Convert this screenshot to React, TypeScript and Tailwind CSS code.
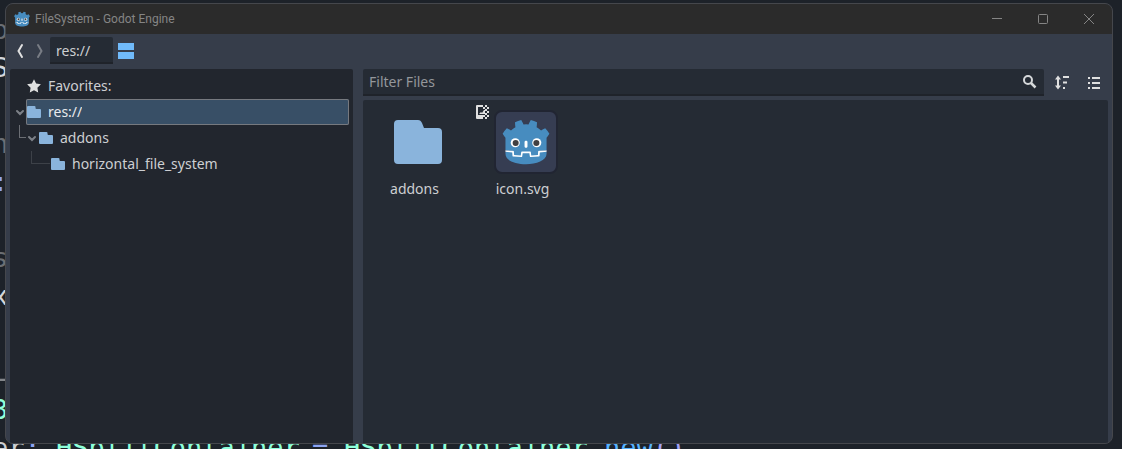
import type { ReactNode } from "react";

const HEAD =
  "m105 673 152 14q12 1 15 14l4 67 132 10 8-61q2-11 15-15h162q13 4 15 15l8 61 132-10 4-67q3-13 15-14l152-14V427q30-39 56-81-35-59-83-108-43 20-82 47-40-37-88-64 7-51 8-102-59-28-123-42-26 43-46 89-49-7-98 0-20-46-46-89-64 14-123 42 1 51 8 102-48 27-88 64-39-27-82-47-48 49-83 108 26 42 56 81zm0 33v39c0 276 813 276 814 0v-39l-134 12-5 69q-2 10-14 13l-162 11q-12 0-16-11l-10-65H446l-10 65q-4 11-16 11l-162-11q-12-3-14-13l-5-69z";

function GodotHead() {
  return (
    <>
      <g fill="#fff">
        <path d="M105 673v33q407 354 814 0v-33z" />
        <path d={HEAD} fill="#478cbf" />
        <path d="M483 600c0 34 58 34 58 0v-86c0-34-58-34-58 0z" />
        <circle cx="725" cy="526" r="90" />
        <circle cx="299" cy="526" r="90" />
      </g>
      <g fill="#414042">
        <circle cx="307" cy="532" r="60" />
        <circle cx="717" cy="532" r="60" />
      </g>
    </>
  );
}

function ProjectIcon() {
  return (
    <svg viewBox="0 0 128 128" className="size-16" aria-hidden="true">
      <rect x="2" y="2" width="124" height="124" rx="14" fill="#363d52" stroke="#212532" strokeWidth="4" />
      <g transform="translate(12.322 12.322) scale(.101)">
        <GodotHead />
      </g>
    </svg>
  );
}

function FolderBig() {
  return (
    <svg viewBox="0 0 64 64" className="size-16" aria-hidden="true">
      <path
        d="M12 10h20c2 0 3 1 4 3l2 5h14a4 4 0 0 1 4 4v28a4 4 0 0 1-4 4H12a4 4 0 0 1-4-4V14a4 4 0 0 1 4-4z"
        fill="#8ab4dc"
      />
    </svg>
  );
}

function FolderSmall() {
  return (
    <svg viewBox="0 0 16 16" className="size-4 shrink-0" aria-hidden="true">
      <path
        d="M2 2a1 1 0 0 0-1 1v10a1 1 0 0 0 1 1h12a1 1 0 0 0 1-1V6a1 1 0 0 0-1-1h-3.500a1 1 0 0 1-1-1V3a1 1 0 0 0-1-1z"
        fill="#8ab4dc"
      />
    </svg>
  );
}

function Arrow() {
  return (
    <svg viewBox="0 0 12 12" className="size-3 shrink-0" fill="none" stroke="#7c8087" strokeWidth="2" strokeLinecap="round" aria-hidden="true">
      <path d="M3 5l3 3 3-3" />
    </svg>
  );
}

function TreeRow({ lead, icon, label, selected }: { lead: ReactNode; icon: ReactNode; label: string; selected?: boolean }) {
  return (
    <li className="flex h-[26px] items-center" role="treeitem" aria-selected={!!selected}>
      {lead}
      <div
        className={
          selected
            ? "flex h-full min-w-0 grow items-center gap-1.5 rounded-xs bg-[#384f66] text-[#e8eaed] inset-ring inset-ring-[#76797f]"
            : "flex h-full min-w-0 grow items-center gap-1.5"
        }
      >
        {icon}
        <span className="truncate">{label}</span>
      </div>
    </li>
  );
}

const codeLines = [
  { text: "p", tone: "text-[#6b6f74]" },
  { text: "S", tone: "text-[#d3d6da]" },
  { text: "", tone: "" },
  { text: "n", tone: "text-[#6b6f74]" },
  { text: ":", tone: "text-[#8da5f3]" },
  { text: "", tone: "" },
  { text: "s", tone: "text-[#6b6f74]" },
  { text: "x", tone: "text-[#d3d6da]" },
  { text: "", tone: "" },
  { text: "L", tone: "text-[#83868a]" },
  { text: "3", tone: "text-[#8effda]" },
];

function CodeBackdrop() {
  return (
    <div
      className="absolute top-0 -left-2 flex flex-col whitespace-pre pt-[11px] font-['DejaVu_Sans_Mono',monospace] text-[27px] leading-[38px]"
      aria-hidden="true"
    >
      {codeLines.map((line, i) => (
        <div key={i} className={`h-[38px] ${line.tone}`}>
          {line.text}
        </div>
      ))}
      <div className="flex h-[38px] gap-4 text-[#8effda]">
        <span className="w-12 text-[#cdcfd2]">
          er<span className="text-[#8da5f3]">:</span>
        </span>
        <span className="w-60">HSplitContainer</span>
        <span className="w-4 text-[#8da5f3]">=</span>
        <span>
          HSplitContainer<span className="text-[#8da5f3]">.</span>
          <span className="text-[#57b3ff]">new</span>
          <span className="text-[#a3a3f5]">()</span>
        </span>
      </div>
    </div>
  );
}

function TitleBar() {
  return (
    <header className="flex h-[30px] shrink-0 items-center bg-[#2b2b2b] pl-2 text-[#858585]">
      <svg viewBox="40 40 944 944" className="size-4" aria-hidden="true">
        <GodotHead />
      </svg>
      <h1 className="grow pl-[5px] font-['Roboto',sans-serif] text-xs">FileSystem - Godot Engine</h1>
      <button type="button" aria-label="Minimize" className="flex h-full w-[46px] items-center justify-center">
        <svg viewBox="0 0 10 10" className="size-2.5" stroke="currentColor"><path d="M0 4.500h10" /></svg>
      </button>
      <button type="button" aria-label="Maximize" className="flex h-full w-[46px] items-center justify-center">
        <svg viewBox="0 0 10 10" className="size-2.5" fill="none" stroke="currentColor"><rect x=".5" y=".5" width="9" height="9" rx="1" /></svg>
      </button>
      <button type="button" aria-label="Close" className="flex h-full w-[46px] items-center justify-center">
        <svg viewBox="0 0 10 10" className="size-2.5" stroke="currentColor"><path d="M0 0l10 10M10 0L0 10" /></svg>
      </button>
    </header>
  );
}

function Toolbar() {
  return (
    <div className="flex h-[35px] shrink-0 items-center pb-0.5 pl-1">
      <button type="button" aria-label="Back" className="flex w-5 justify-center text-[#e0e0e0]">
        <svg viewBox="0 0 16 16" className="size-4" fill="none" stroke="currentColor" strokeWidth="2" strokeLinecap="round"><path d="M10 2L6.500 8l3.500 6" /></svg>
      </button>
      <button type="button" aria-label="Forward" className="flex w-5 justify-center text-[#797d85]">
        <svg viewBox="0 0 16 16" className="size-4" fill="none" stroke="currentColor" strokeWidth="2" strokeLinecap="round"><path d="M6 2l3.500 6L6 14" /></svg>
      </button>
      <input
        aria-label="Path"
        defaultValue="res://"
        className="h-[27px] w-[63px] rounded-t-xs border-b-2 border-[#1f232a] bg-[#252b34] px-1.5 pt-0.5 outline-none"
      />
      <button type="button" aria-label="Split mode" className="ml-[5px]">
        <svg viewBox="0 0 16 16" className="size-4" fill="#70bafa"><path d="M0 0h16v7H0zM0 9h16v7H0z" /></svg>
      </button>
    </div>
  );
}

function Tree() {
  return (
    <ul role="tree" className="w-[343px] shrink-0 rounded-t-xs bg-[#22262e] py-1 pr-1 pl-1">
      <TreeRow
        lead={<span className="w-3" />}
        icon={
          <svg viewBox="0 0 16 16" className="size-4 shrink-0" fill="#e0e0e0" aria-hidden="true">
            <path d="M8 1.200L5.900 5.600 1.100 6.300l3.500 3.400-.8 4.800L8 12.200l4.200 2.300-.8-4.800 3.500-3.400-4.800-.7z" />
          </svg>
        }
        label="Favorites:"
      />
      <TreeRow selected lead={<Arrow />} icon={<FolderSmall />} label="res://" />
      <TreeRow
        lead={
          <>
            <span className="ml-[5px] h-[13px] w-[7px] shrink-0 self-start border-b border-l border-[#6b6e74]" />
            <Arrow />
          </>
        }
        icon={<FolderSmall />}
        label="addons"
      />
      <TreeRow
        lead={<span className="ml-[17px] h-[13px] w-[19px] shrink-0 self-start border-b border-l border-[#3d4148]" />}
        icon={<FolderSmall />}
        label="horizontal_file_system"
      />
    </ul>
  );
}

function FileItem({ icon, label, badge }: { icon: ReactNode; label: string; badge?: ReactNode }) {
  return (
    <li className="relative flex w-[108px] flex-col items-center">
      {badge}
      {icon}
      <span className="mt-[5px] pr-[7px] leading-5">{label}</span>
    </li>
  );
}

function TextureBadge() {
  return (
    <svg viewBox="0 0 16 16" className="absolute -top-1.5 left-0.5 size-4" fill="#e0e0e0" aria-hidden="true">
      <path d="M3 1h6v2H4v8h7v2H9v2H3a1 1 0 0 1-1-1V2a1 1 0 0 1 1-1zM5 10l2-2 1 1 2-3h1v4z" />
      <path d="M11 1h2v2h-2zM9 3h2v2H9zM13 3h2v2h-2zM11 5h2v2h-2zM13 7h2v2h-2zM11 9h2v2h-2zM13 11h2v2h-2zM11 13h2v2h-2z" />
    </svg>
  );
}

function Files() {
  return (
    <section className="flex min-w-0 grow flex-col gap-1">
      <div className="flex items-center">
        <label className="flex h-[27px] min-w-0 grow items-center rounded-t-xs border-b-2 border-[#1f232a] bg-[#252b34] pr-1.5 pl-1.5">
          <input aria-label="Filter Files" placeholder="Filter Files" className="min-w-0 grow outline-none placeholder:text-[#94979b]" />
          <svg viewBox="0 0 16 16" className="size-4" fill="none" stroke="#d6d8da" strokeWidth="2" aria-hidden="true">
            <circle cx="6" cy="6" r="4" />
            <path d="M9 9l4.500 4.500" strokeWidth="2.500" />
          </svg>
        </label>
        <button type="button" aria-label="Sort files" className="ml-2.5">
          <svg viewBox="0 0 16 16" className="size-4" fill="#e0e0e0">
            <path d="M4 .500L1 4.500h2v6H1L4 14.500l3-4H5v-6h2zM9 1h6v2H9zM9 6.500h4v2H9zM9 12h2v2H9z" />
          </svg>
        </button>
        <button type="button" aria-label="List view" className="mr-1.5 ml-4">
          <svg viewBox="0 0 16 16" className="size-4" fill="#e0e0e0">
            <path d="M2 2h2v2H2zM6 2h8v2H6zM2 7h2v2H2zM6 7h8v2H6zM2 12h2v2H2zM6 12h8v2H6z" />
          </svg>
        </button>
      </div>
      <ul className="flex grow flex-wrap content-start rounded-t-xs bg-[#252b34] px-px py-2.5">
        <FileItem icon={<FolderBig />} label="addons" />
        <FileItem icon={<ProjectIcon />} label="icon.svg" badge={<TextureBadge />} />
      </ul>
    </section>
  );
}

export default function App() {
  return (
    <div className="relative h-screen overflow-hidden bg-[#1d2229] pt-[3px] pr-[9px] pb-[5px] pl-[5px]">
      <CodeBackdrop />
      <main className="relative flex h-full flex-col overflow-hidden rounded-lg border border-[#45474c] bg-[#363d4a] font-['Noto_Sans',sans-serif] text-sm text-[#cdcfd2]">
        <TitleBar />
        <Toolbar />
        <div className="flex min-h-0 grow gap-2.5 pr-1 pl-1">
          <Tree />
          <Files />
        </div>
      </main>
    </div>
  );
}
